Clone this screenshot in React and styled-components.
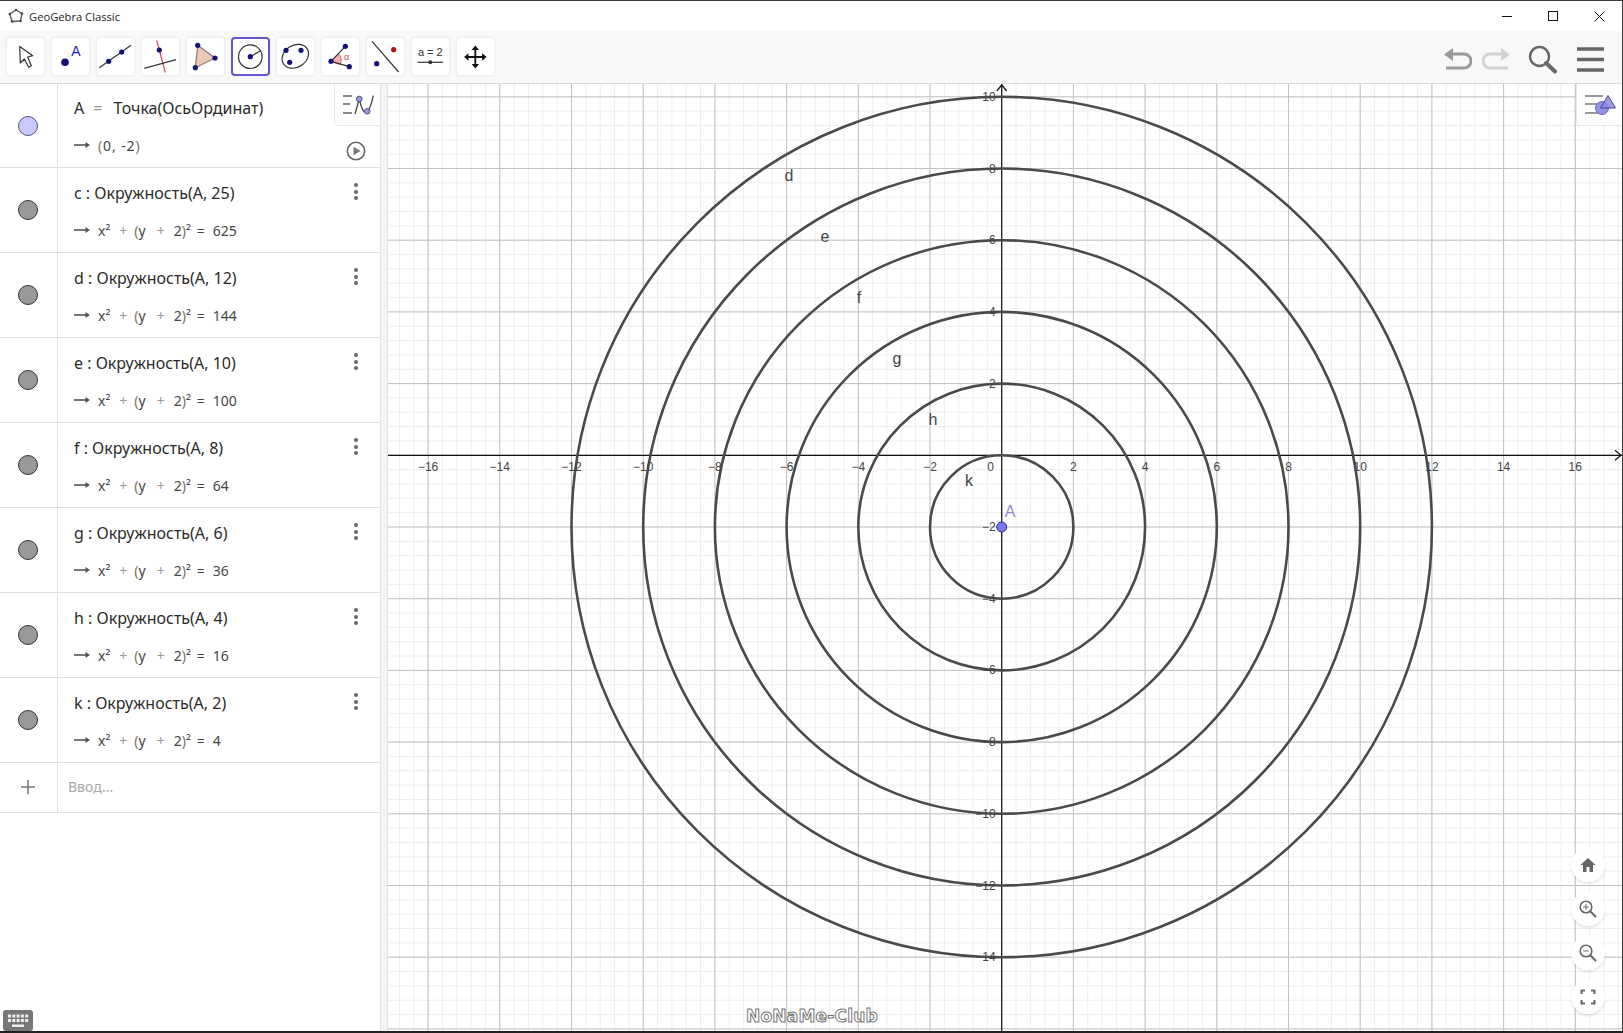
import React from 'react';
import styled, { createGlobalStyle } from 'styled-components';

const GlobalStyle = createGlobalStyle`
    html, body { margin: 0; padding: 0; background: #fff; }
    body { font-family: "Noto Sans", "Open Sans", sans-serif; }
`;

const Frame = styled.div`
    width: 1623px;
    height: 1033px;
    box-sizing: border-box;
    display: flex;
    flex-direction: column;
    overflow: hidden;
    background: #fff;
    border-top: 1px solid #3a3a3a;
    border-right: 1px solid #3a3a3a;
    border-bottom: 2px solid #222;
`;

const TitleBar = styled.div`
    height: 30px;
    display: flex;
    align-items: center;
    padding-left: 8px;
    background: #fff;
    flex: none;
`;

const AppTitle = styled.span`
    margin-left: 5px;
    font-family: "Open Sans", sans-serif;
    font-size: 11.2px;
    color: #222;
`;

const WindowButtons = styled.div`
    margin-left: auto;
    display: flex;
`;

const WindowButton = styled.div`
    width: 46px;
    height: 30px;
    display: flex;
    align-items: center;
    justify-content: center;
`;

const Toolbar = styled.div`
    height: 53px;
    flex: none;
    box-sizing: border-box;
    display: flex;
    gap: 6px;
    padding: 6px 18px 0 6px;
    background: #f8f8f8;
    border-bottom: 1px solid #dcdcdc;
`;

const ToolButton = styled.div`
    width: 39px;
    height: 39px;
    box-sizing: border-box;
    background: #fff;
    border-radius: 4px;
    border: ${p => (p.$active ? '2px solid #6557d2' : '1px solid #efefef')};
    box-shadow: 0 0 2px rgba(0, 0, 0, 0.08);
    svg { display: block; margin: ${p => (p.$active ? '-2px' : '-1px')}; }
`;

const RightTools = styled.div`
    margin-left: auto;
    display: flex;
    gap: 10px;
    padding-top: 8px;
    height: 30px;
`;

const UndoFrame = styled.svg`
    margin-top: 2px;
    transform: ${p => (p.$flip ? 'scaleX(-1)' : 'none')};
`;

const SearchFrame = styled.svg`
    margin-left: 8px;
`;

const MenuFrame = styled.svg`
    margin-left: 8px;
`;

const Main = styled.div`
    flex: 1;
    display: flex;
    min-height: 0;
`;

const AlgebraPanel = styled.div`
    width: 380px;
    flex: none;
    position: relative;
    background: #fff;
`;

const Row = styled.div`
    height: ${p => p.$height}px;
    box-sizing: border-box;
    display: flex;
    border-bottom: 1px solid #e0e0e0;
    position: relative;
`;

const MarbleCell = styled.div`
    width: 58px;
    flex: none;
    box-sizing: border-box;
    display: flex;
    align-items: center;
    justify-content: center;
    padding-right: 1px;
    border-right: 1px solid #e0e0e0;
`;

const Marble = styled.div`
    width: 20px;
    height: 20px;
    box-sizing: border-box;
    border-radius: 50%;
    background: ${p => p.$fill};
    border: 1px solid ${p => p.$edge};
`;

const RowBody = styled.div`
    padding: ${p => p.$top}px 0 0 16px;
    display: flex;
    flex-direction: column;
    gap: ${p => p.$gap}px;
`;

const Definition = styled.div`
    font-size: 16px;
    line-height: 22px;
    color: #2b2b2b;
    white-space: pre;
`;

const Output = styled.div`
    display: flex;
    align-items: center;
    height: 20px;
    font-size: 14px;
    letter-spacing: ${p => (p.$wide ? '0.9px' : '0')};
    color: #444;
    white-space: pre;
    svg { margin-right: 8px; flex: none; }
`;

const Equals = styled.span`
    color: #9a9a9a;
    margin: 0 11px 0 9px;
`;

const Plus = styled.span`
    color: #9a9a9a;
    margin: ${p => (p.$inner ? '0 9px 0 11px' : '0 7px 0 9px')};
`;

const Same = styled.span`
    margin: 0 8px 0 6px;
`;

const Paren = styled.span`
    color: #77775a;
`;

const MoreDots = styled.div`
    position: absolute;
    left: 354px;
    top: 15px;
    width: 4px;
    display: flex;
    flex-direction: column;
    gap: 2.5px;
    span { width: 4px; height: 4px; border-radius: 50%; background: #666; }
`;

const PlayButton = styled.div`
    position: absolute;
    left: 346px;
    top: 57px;
    svg { display: block; }
`;

const StyleTab = styled.div`
    position: absolute;
    top: 0;
    right: 0;
    width: 46px;
    height: 42px;
    background: #fff;
    border-bottom: 1px solid #e6e6e6;
    border-left: 1px solid #e6e6e6;
    border-bottom-left-radius: 5px;
    box-sizing: border-box;
    svg { display: block; margin: 0 0 0 -1px; }
`;

const InputRow = styled(Row)`
    height: 50px;
    align-items: stretch;
`;

const PlusCell = styled(MarbleCell)`
    padding-bottom: 2px;
    svg { display: block; }
`;

const InputHint = styled.div`
    display: flex;
    align-items: center;
    padding: 0 0 3px 10px;
    font-size: 14px;
    color: #a8a8a8;
`;

const KeyboardButton = styled.div`
    position: absolute;
    left: 3px;
    bottom: 0;
    svg { display: block; }
`;

const Divider = styled.div`
    width: 8px;
    flex: none;
    box-sizing: border-box;
    background: #f3f3f3;
    border-left: 1px solid #e4e4e4;
    border-right: 1px solid #e4e4e4;
`;

const GraphicsView = styled.div`
    flex: 1;
    position: relative;
    overflow: hidden;
    background: #fff;
    svg.plane { display: block; }
`;

const FloatButton = styled.div`
    position: absolute;
    left: ${p => p.$left}px;
    top: ${p => p.$top}px;
    width: 34px;
    height: 34px;
    border-radius: 50%;
    background: #fff;
    box-shadow: 0 2px 3px rgba(0, 0, 0, 0.1);
    display: flex;
    align-items: center;
    justify-content: center;
`;

const Watermark = styled.div`
    position: absolute;
    left: 358px;
    bottom: 5px;
    font-family: "DejaVu Sans", sans-serif;
    font-weight: 700;
    font-size: 17px;
    line-height: 20px;
    letter-spacing: 0.2px;
    color: #fff;
    -webkit-text-stroke: 1px #777;
    white-space: pre;
`;

const NAVY = '#12127a';
const LINE = '#333';

const Dot = ({ x, y, r = 2.6, fill = NAVY }) => <circle cx={x} cy={y} r={r} fill={fill} />;

const toolIcons = [
    <>
        <path d="M13.7 9.5 14.3 26 18.3 22 22.7 30.3 25.3 28.7 21.7 20 26.7 18.7Z" fill="#fff" stroke="#333" strokeWidth="1.2" strokeLinejoin="round" />
    </>,
    <>
        <Dot x={14} y={25.3} r={3.8} />
        <text x={25} y={19} fontFamily="Liberation Sans" fontSize="14" fill="#1a1ad0" textAnchor="middle">A</text>
    </>,
    <>
        <line x1="3.3" y1="30.7" x2="35" y2="8.3" stroke={LINE} strokeWidth="1.2" />
        <Dot x={12.7} y={24.3} />
        <Dot x={25.7} y={15} />
    </>,
    <>
        <line x1="15.7" y1="3.3" x2="24.3" y2="35.3" stroke="#d9435a" strokeWidth="1.2" />
        <line x1="3.3" y1="31.3" x2="35" y2="22.7" stroke={LINE} strokeWidth="1.2" />
        <Dot x={18.3} y={13} />
    </>,
    <>
        <path d="M11.7 8.3 29 21 9.3 30.7Z" fill="#ecc8b6" stroke="#8a7a78" strokeWidth="1.2" />
        <Dot x={11.7} y={8.3} />
        <Dot x={29} y={21} />
        <Dot x={9.3} y={30.7} />
    </>,
    <>
        <circle cx="19.3" cy="19.7" r="11.8" fill="none" stroke={LINE} strokeWidth="1.2" />
        <line x1="19.3" y1="19.7" x2="30" y2="13.5" stroke={LINE} strokeWidth="1.2" />
        <Dot x={19.3} y={19.7} />
    </>,
    <>
        <ellipse cx="19.3" cy="19.3" rx="14" ry="11" transform="rotate(-32 19.3 19.3)" fill="none" stroke={LINE} strokeWidth="1.2" />
        <Dot x={10} y={13.3} />
        <Dot x={25} y={13.3} />
        <Dot x={13.7} y={25.3} />
    </>,
    <>
        <path d="M10 24.3 17.5 16.6Q21.5 20.6 19.5 27.5Z" fill="#f2b3b3" stroke="#d9435a" strokeWidth="0.8" />
        <line x1="10" y1="24.3" x2="24.3" y2="9.3" stroke={LINE} strokeWidth="1.2" />
        <line x1="10" y1="24.3" x2="28.3" y2="29.7" stroke={LINE} strokeWidth="1.2" />
        <Dot x={10} y={24.3} />
        <Dot x={24.3} y={9.3} />
        <Dot x={28.3} y={29.7} />
        <text x={25.5} y={23} fontFamily="Liberation Sans" fontSize="9" fill="#d9435a" textAnchor="middle">α</text>
    </>,
    <>
        <line x1="6" y1="4.3" x2="32.7" y2="35" stroke={LINE} strokeWidth="1.2" />
        <Dot x={27.7} y={12.7} fill="#a81818" />
        <Dot x={10.7} y={26.7} />
    </>,
    <>
        <text x={19.3} y={19} fontFamily="Liberation Sans" fontSize="11" fill="#333" textAnchor="middle">a = 2</text>
        <line x1="6.7" y1="25.3" x2="32" y2="25.3" stroke={LINE} strokeWidth="1.2" />
        <Dot x={19.3} y={25.3} r={2} fill="#333" />
    </>,
    <>
        <path d="M19.3 10V30M9.5 20H29" stroke="#111" strokeWidth="1.8" />
        <path d="M19.3 8.5 15.6 13H23ZM19.3 31.5 15.6 27H23ZM8 20 12.5 16.3V23.7ZM30.6 20 26.1 16.3V23.7Z" fill="#111" />
    </>,
];

const Undo = ({ color, flip }) => (
    <UndoFrame width="28" height="24" viewBox="0 0 28 24" $flip={flip}>
        <path d="M3 7H20A6.5 6.5 0 0 1 20 21H2" fill="none" stroke={color} strokeWidth="3" />
        <path d="M0 7.5 9 1V14Z" fill={color} />
    </UndoFrame>
);

const SearchIcon = () => (
    <SearchFrame width="30" height="30" viewBox="0 0 30 30">
        <circle cx="11.5" cy="11.5" r="9.5" fill="none" stroke="#666" strokeWidth="2.4" />
        <line x1="18" y1="18" x2="27" y2="26.5" stroke="#666" strokeWidth="4" strokeLinecap="round" />
    </SearchFrame>
);

const MenuIcon = () => (
    <MenuFrame width="28" height="28" viewBox="0 0 28 28">
        <path d="M1 4H28M1 14.5H28M1 25H28" stroke="#666" strokeWidth="3.4" />
    </MenuFrame>
);

const ArrowMark = () => (
    <svg width="16" height="10" viewBox="0 0 16 10">
        <path d="M0 5H14" stroke="#555" strokeWidth="1.6" />
        <path d="M16 5 11.5 2V8Z" fill="#555" />
    </svg>
);

const CircleEq = ({ value }) => (
    <>
        x²<Plus>+</Plus><Paren>(</Paren>y<Plus $inner>+</Plus>2<Paren>)</Paren>²<Same>=</Same>{value}
    </>
);

const rows = [
    { name: 'c', radius: 25, value: 625 },
    { name: 'd', radius: 12, value: 144 },
    { name: 'e', radius: 10, value: 100 },
    { name: 'f', radius: 8, value: 64 },
    { name: 'g', radius: 6, value: 36 },
    { name: 'h', radius: 4, value: 16 },
    { name: 'k', radius: 2, value: 4 },
];

// plane coordinates are relative to the top left of the graphics view
const WIDTH = 1234;
const HEIGHT = 948;
const OX = 613.7;
const OY = 371.3;
const UNIT = 35.85;

const range = (from, to, step) => {
    const out = [];
    for (let v = from; v <= to + 1e-6; v += step) out.push(v);
    return out;
};

const Plane = () => {
    const xMinor = range(-17.2, 17.6, 0.4);
    const yMinor = range(-16, 10.4, 0.4);
    const xMajor = range(-16, 16, 2);
    const yMajor = range(-16, 10, 2);
    const px = v => OX + v * UNIT;
    const py = v => OY - v * UNIT;
    return (
        <svg className="plane" width={WIDTH} height={HEIGHT} viewBox={`0 0 ${WIDTH} ${HEIGHT}`}>
            {xMinor.map(v => <line key={v} x1={px(v)} x2={px(v)} y1="0" y2={HEIGHT} stroke="#eeeeee" strokeWidth="1" />)}
            {yMinor.map(v => <line key={v} y1={py(v)} y2={py(v)} x1="0" x2={WIDTH} stroke="#eeeeee" strokeWidth="1" />)}
            {xMajor.map(v => <line key={v} x1={px(v)} x2={px(v)} y1="0" y2={HEIGHT} stroke="#c2c2c2" strokeWidth="1" />)}
            {yMajor.map(v => <line key={v} y1={py(v)} y2={py(v)} x1="0" x2={WIDTH} stroke="#c2c2c2" strokeWidth="1" />)}
            <line x1="0" x2={WIDTH} y1={OY} y2={OY} stroke="#111" strokeWidth="1.2" />
            <line x1={OX} x2={OX} y1="0" y2={HEIGHT} stroke="#111" strokeWidth="1.2" />
            <path d={`M${OX - 5} 7 ${OX} 1 ${OX + 5} 7`} fill="none" stroke="#111" strokeWidth="1.2" />
            <path d={`M${WIDTH - 7} ${OY - 5} ${WIDTH - 1} ${OY} ${WIDTH - 7} ${OY + 5}`} fill="none" stroke="#111" strokeWidth="1.2" />
            {[2, 4, 6, 8, 10, 12].map(r => (
                <circle key={r} cx={OX} cy={py(-2)} r={r * UNIT} fill="none" stroke="#4a4a4a" strokeWidth="2.6" />
            ))}
            <g fontFamily="Liberation Sans" fontSize="12" fill="#444">
                {xMajor.filter(v => v !== 0).map(v => (
                    <text key={v} x={px(v)} y={OY + 16} textAnchor="middle">{v < 0 ? `−${-v}` : v}</text>
                ))}
                {yMajor.filter(v => v !== 0 && v >= -14).map(v => (
                    <text key={v} x={OX - 6} y={py(v) + 4} textAnchor="end">{v < 0 ? `−${-v}` : v}</text>
                ))}
                <text x={OX - 11} y={OY + 16} textAnchor="middle">0</text>
            </g>
            <g fontFamily="Liberation Sans" fontSize="16" fill="#444">
                <text x="401" y="97" textAnchor="middle">d</text>
                <text x="437" y="158" textAnchor="middle">e</text>
                <text x="471" y="219" textAnchor="middle">f</text>
                <text x="509" y="280" textAnchor="middle">g</text>
                <text x="545" y="341" textAnchor="middle">h</text>
                <text x="581" y="402" textAnchor="middle">k</text>
            </g>
            <text x="622" y="433" fontFamily="Liberation Sans" fontSize="16" fill="#8d89cc" textAnchor="middle">A</text>
            <circle cx={OX} cy={py(-2)} r="5" fill="#7a78f0" stroke="#2f2f80" strokeWidth="1" />
        </svg>
    );
};

const App = () => (
    <Frame>
        <GlobalStyle />
        <TitleBar>
            <svg width="16" height="16" viewBox="0 0 16 16">
                <path d="M8 2 14 5.5 12.5 13 4 13.5 1.8 6Z" fill="none" stroke="#555" strokeWidth="1.3" strokeLinejoin="round" />
                <g fill="#444">
                    <circle cx="8" cy="2" r="1.2" /><circle cx="14" cy="5.5" r="1.2" /><circle cx="12.5" cy="13" r="1.2" />
                    <circle cx="4" cy="13.5" r="1.2" /><circle cx="1.8" cy="6" r="1.2" />
                </g>
            </svg>
            <AppTitle>GeoGebra Classic</AppTitle>
            <WindowButtons>
                <WindowButton>
                    <svg width="10" height="10" viewBox="0 0 10 10"><path d="M0 5.5H10" stroke="#111" /></svg>
                </WindowButton>
                <WindowButton>
                    <svg width="10" height="10" viewBox="0 0 10 10"><rect x="0.5" y="0.5" width="9" height="9" fill="none" stroke="#111" /></svg>
                </WindowButton>
                <WindowButton>
                    <svg width="11" height="11" viewBox="0 0 11 11"><path d="M0.5 0.5 10.5 10.5M10.5 0.5 0.5 10.5" stroke="#111" /></svg>
                </WindowButton>
            </WindowButtons>
        </TitleBar>

        <Toolbar>
            {toolIcons.map((icon, index) => (
                <ToolButton key={index} $active={index === 5}>
                    <svg width="39" height="39" viewBox="0 0 39 39">{icon}</svg>
                </ToolButton>
            ))}
            <RightTools>
                <Undo color="#9a9a9a" />
                <Undo color="#d2d2d2" flip />
                <SearchIcon />
                <MenuIcon />
            </RightTools>
        </Toolbar>

        <Main>
            <AlgebraPanel>
                <Row $height={84}>
                    <MarbleCell>
                        <Marble $fill="#c9c8ff" $edge="#55557f" />
                    </MarbleCell>
                    <RowBody $top={13} $gap={16}>
                        <Definition>A<Equals>=</Equals>Точка(ОсьОрдинат)</Definition>
                        <Output $wide>
                            <ArrowMark />
                            <Paren>(</Paren>0, -2<Paren>)</Paren>
                        </Output>
                    </RowBody>
                    <StyleTab>
                        <svg width="46" height="42" viewBox="0 0 46 42">
                            <path d="M9 12H18M9 20H16M9 29H18" stroke="#888" strokeWidth="2" />
                            <path d="M21 30 25.3 15C28 26 30 30 33.3 27.3 36 25 38 18 39.3 11.7" fill="none" stroke="#444" strokeWidth="1.3" />
                            <circle cx="25.3" cy="15" r="2.8" fill="#9a98e0" stroke="#55557f" />
                            <circle cx="33.3" cy="27.3" r="2.8" fill="#9a98e0" stroke="#55557f" />
                        </svg>
                    </StyleTab>
                    <PlayButton>
                        <svg width="20" height="20" viewBox="0 0 20 20">
                            <circle cx="10" cy="10" r="8.7" fill="none" stroke="#666" strokeWidth="1.6" />
                            <path d="M7.5 5.8 14.5 10 7.5 14.2Z" fill="#777" />
                        </svg>
                    </PlayButton>
                </Row>
                {rows.map(row => (
                    <Row key={row.name} $height={85}>
                        <MarbleCell>
                            <Marble $fill="#999" $edge="#333" />
                        </MarbleCell>
                        <RowBody $top={14} $gap={16}>
                            <Definition>{row.name} : Окружность(A, {row.radius})</Definition>
                            <Output>
                                <ArrowMark />
                                <CircleEq value={row.value} />
                            </Output>
                        </RowBody>
                        <MoreDots><span /><span /><span /></MoreDots>
                    </Row>
                ))}
                <InputRow $height={50}>
                    <PlusCell>
                        <svg width="16" height="16" viewBox="0 0 16 16">
                            <path d="M8 1V15M1 8H15" stroke="#777" strokeWidth="1.6" />
                        </svg>
                    </PlusCell>
                    <InputHint>Ввод...</InputHint>
                </InputRow>
                <KeyboardButton>
                    <svg width="30" height="21" viewBox="0 0 30 21">
                        <rect width="30" height="21" rx="3" fill="#777" />
                        <g fill="#eee">
                            {[0, 1, 2, 3, 4].map(i => <rect key={`a${i}`} x={5 + i * 4.3} y="4.5" width="3" height="3" />)}
                            {[0, 1, 2, 3, 4].map(i => <rect key={`b${i}`} x={5 + i * 4.3} y="9" width="3" height="3" />)}
                            <rect x="9" y="14.5" width="12" height="2.5" />
                        </g>
                    </svg>
                </KeyboardButton>
            </AlgebraPanel>

            <Divider />

            <GraphicsView>
                <Plane />
                <StyleTab>
                    <svg width="46" height="42" viewBox="0 0 46 42">
                        <path d="M9 12H27M9 20H22M9 29H22" stroke="#999" strokeWidth="2.2" />
                        <circle cx="26" cy="24" r="6.5" fill="#9390e6" stroke="#6a68b8" />
                        <path d="M32 11.5 39.5 24H24.5Z" fill="#8f8be0" fillOpacity="0.85" stroke="#44449a" />
                    </svg>
                </StyleTab>
                <FloatButton $left={1183} $top={764}>
                    <svg width="18" height="18" viewBox="0 0 18 18">
                        <path d="M9 2 1.5 9H4V16H7.5V11H10.5V16H14V9H16.5Z" fill="#666" />
                    </svg>
                </FloatButton>
                <FloatButton $left={1183} $top={808}>
                    <svg width="20" height="20" viewBox="0 0 20 20">
                        <circle cx="8" cy="8" r="5.8" fill="none" stroke="#666" strokeWidth="1.6" />
                        <path d="M5.2 8H10.8M8 5.2V10.8" stroke="#666" strokeWidth="1" />
                        <path d="M12.5 12.5 18 18" stroke="#666" strokeWidth="2" />
                    </svg>
                </FloatButton>
                <FloatButton $left={1183} $top={852}>
                    <svg width="20" height="20" viewBox="0 0 20 20">
                        <circle cx="8" cy="8" r="5.8" fill="none" stroke="#666" strokeWidth="1.6" />
                        <path d="M5.2 8H10.8" stroke="#666" strokeWidth="1" />
                        <path d="M12.5 12.5 18 18" stroke="#666" strokeWidth="2" />
                    </svg>
                </FloatButton>
                <FloatButton $left={1183} $top={896}>
                    <svg width="16" height="16" viewBox="0 0 16 16">
                        <path d="M1.5 5V1.5H5M11 1.5H14.5V5M14.5 11V14.5H11M5 14.5H1.5V11" fill="none" stroke="#666" strokeWidth="2" />
                    </svg>
                </FloatButton>
                <Watermark>NoNaMe-Club</Watermark>
            </GraphicsView>
        </Main>
    </Frame>
);

export default App;
